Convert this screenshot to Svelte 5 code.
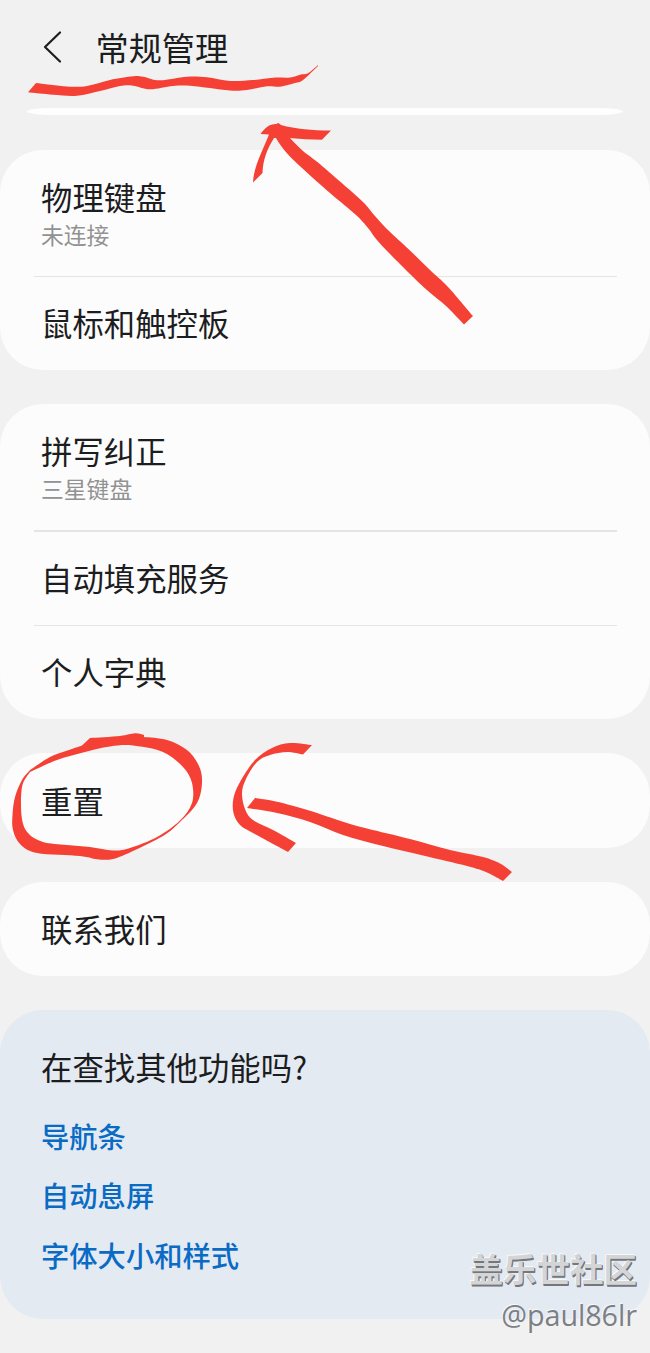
<script>
  const groups = [
    [{ title: '物理键盘', note: '未连接' }, { title: '鼠标和触控板' }],
    [{ title: '拼写纠正', note: '三星键盘' }, { title: '自动填充服务' }, { title: '个人字典' }],
    [{ title: '重置' }],
    [{ title: '联系我们' }]
  ];
  const links = ['导航条', '自动息屏', '字体大小和样式'];

  // Smooth curve through a list of points, without the leading move command.
  function curve(p) {
    let d = `${p[0][0]} ${p[0][1]}`;
    for (let i = 0; i < p.length - 1; i++) {
      const a = p[i - 1] ?? p[i];
      const b = p[i];
      const c = p[i + 1];
      const e = p[i + 2] ?? c;
      d += ` C${b[0] + (c[0] - a[0]) / 6} ${b[1] + (c[1] - a[1]) / 6} ${c[0] - (e[0] - b[0]) / 6} ${c[1] - (e[1] - b[1]) / 6} ${c[0]} ${c[1]}`;
    }
    return d;
  }

  // A pen stroke is the area between its two edges.
  const pen = (one, other) => `M${curve(one)} L${curve(other)} Z`;

  const underline = pen(
    [[36, 83], [67, 86.5], [87, 86], [110, 80], [133, 76.3], [143, 76.7], [160, 80.3], [187, 76.7], [207, 77.3], [230, 81], [253, 80], [273, 77.7], [290, 77.5], [300, 74.7], [308, 73.3], [318, 65]],
    [[318, 66], [303, 80], [295, 83], [280, 86.7], [267, 86.3], [247, 90], [230, 90.5], [210, 88], [190, 85.7], [173, 86], [150, 89.3], [133, 85.7], [120, 86], [100, 91], [77, 95.7], [53, 94.7], [28, 92.3]]
  );
  const shaft = pen(
    [[280, 127], [290, 138], [303, 151], [318, 162.5], [340, 181.5], [363, 202], [375, 216], [388, 230], [410, 250.5], [430, 270], [448, 287], [473, 316]],
    [[464, 324.5], [446, 306], [428, 291], [410, 274], [380, 243.5], [368, 228], [356, 215], [330, 193], [302, 168], [285, 151], [274, 135]]
  );
  const tip = 'M260.5 134 C265 128 269 124 276 124 L278.5 123 L281 125 C296 129 312 130.5 331 130.5 L322 139.7 C311 139.5 300 139 289 138 L274 138 C267 149 263 160 262.5 173 L253 182.5 C253.5 167 263 150 269 134.5 Z';
  const loop = `M${curve([[30, 770], [50, 757], [66, 751], [82, 745.5]])} L${curve([[90, 738], [120, 736], [135, 733.3], [144, 735]])} L${curve([[144, 737], [167, 740], [187, 750], [199, 766], [202, 783], [197, 803], [180, 822], [163, 836], [133, 851], [113, 859], [97, 859.3], [80, 856], [37, 853], [20, 844], [13, 830], [12.5, 815], [15, 797], [22, 780], [30, 770]])} Z M${curve([[30, 772], [22, 787], [21.7, 817], [28, 833], [43, 842], [67, 845], [90, 847], [113, 850.5], [130, 848], [157, 837], [180, 820.5], [192, 803], [192, 783], [183, 767], [163, 752], [133, 745.5], [110, 746.5], [83, 752.5], [57, 760], [30, 772]])} Z`;
  const hook = pen(
    [[312, 745], [290, 743], [272, 748], [255, 760], [240, 782], [233.5, 798], [233.5, 813], [240, 825], [253, 833], [288, 852]],
    [[296, 843], [273, 830], [253, 820], [245, 809], [242, 793], [246, 779], [257, 762], [270, 755], [287, 752], [303, 754.5]]
  );
  const tail = pen(
    [[255, 798], [277, 801.7], [310, 810.7], [343, 821.7], [367, 828.5], [410, 839], [450, 850], [483, 857], [500, 863.5], [512, 872]],
    [[503, 881], [487, 872.5], [467, 866], [423, 855.5], [383, 846], [343, 835], [310, 822], [277, 813], [247, 808]]
  );
</script>

<div class="screen">
  <header>
    <svg class="back" width="20" height="34" viewBox="0 0 20 34" aria-hidden="true">
      <path d="M17 2.500 L2 17 L17 31.500" />
    </svg>
    <h1>常规管理</h1>
  </header>
  <div class="sliver"></div>

  <main>
    {#each groups as rows}
      <section class="card">
        {#each rows as row}
          <div class="row" class:tall={row.note}>
            <div class="title">{row.title}</div>
            {#if row.note}<div class="note">{row.note}</div>{/if}
          </div>
        {/each}
      </section>
    {/each}

    <section class="card help">
      <h2>在查找其他功能吗?</h2>
      {#each links as link}
        <div class="link">{link}</div>
      {/each}
    </section>
  </main>

  <svg class="marks" width="650" height="1353" viewBox="0 0 650 1353" aria-hidden="true">
    <path d={underline} />
    <path d={shaft} />
    <path d={tip} />
    <path d={loop} fill-rule="evenodd" />
    <path d={hook} />
    <path d={tail} />
  </svg>

  <div class="watermark">
    <div class="site">盖乐世社区</div>
    <div class="user">@paul86lr</div>
  </div>
</div>

<style>
  :global(body) {
    background: #f1f1f1;
  }
  .screen {
    position: relative;
    box-sizing: border-box;
    width: 650px;
    height: 1353px;
    overflow: hidden;
    background: #f1f1f1;
    color: #1c1d1f;
    font-family: "Noto Sans CJK SC", sans-serif;
  }
  header {
    display: flex;
    align-items: center;
    box-sizing: border-box;
    height: 96px;
    padding: 0 0 2px 43px;
    gap: 32.5px;
  }
  h1, h2 {
    margin: 0;
    font-weight: 400;
  }
  h1 {
    font-size: 33.2px;
    line-height: 48px;
  }
  .back {
    fill: none;
    stroke: #1c1d1f;
    stroke-width: 2.2;
    stroke-linecap: round;
    stroke-linejoin: round;
  }
  .sliver {
    height: 7px;
    margin: 12px 27px 34.5px;
    border-radius: 28px / 4px;
    background: #fefefe;
  }
  main {
    display: flex;
    flex-direction: column;
    gap: 34.1px;
  }
  .card {
    border-radius: 43px;
    background: #fcfcfc;
  }
  .row {
    position: relative;
    box-sizing: border-box;
    height: 94.5px;
    padding: 24.5px 42px 0 41px;
  }
  .row.tall {
    height: 126px;
    padding-top: 24px;
  }
  .row + .row::before {
    content: "";
    position: absolute;
    top: 0;
    left: 34px;
    right: 33px;
    height: 1.5px;
    background: #e5e5e6;
  }
  .title, h2 {
    font-size: 31.4px;
    line-height: 46px;
  }
  .note {
    font-size: 22.8px;
    line-height: 30px;
    color: #929292;
  }
  .help {
    box-sizing: border-box;
    height: 309px;
    padding: 33.5px 41px 0;
    background: #e4eaf2;
  }
  h2 {
    margin-bottom: 16px;
  }
  .link {
    font-size: 28.3px;
    font-weight: 500;
    line-height: 59.5px;
    color: #0a6bc4;
  }
  .marks {
    position: absolute;
    inset: 0;
    fill: #f54135;
  }
  .watermark {
    position: absolute;
    right: 13px;
    top: 1244px;
    text-align: right;
    color: #d4d5d7;
    text-shadow: 1px 1px 0 #74777c, 1px 2px 0 #74777c, -1px -1px 0 #f7f8f9;
  }
  .site {
    font-size: 33.5px;
    font-weight: 700;
    line-height: 48px;
  }
  .user {
    padding-top: 2px;
    font-family: "Open Sans", "Noto Sans", sans-serif;
    font-size: 28.7px;
    line-height: 42px;
    color: #7c7f84;
    text-shadow: -1px -1px 0 #f7f8f9;
  }
</style>
